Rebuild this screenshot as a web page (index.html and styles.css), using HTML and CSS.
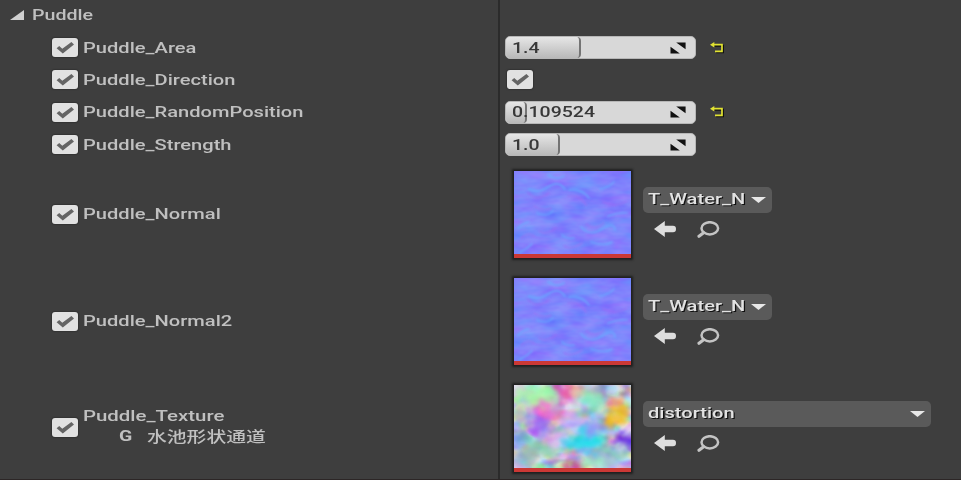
FILE: index.html
```
<!DOCTYPE html>
<html lang="en">
<head>
<meta charset="utf-8">
<title>Puddle</title>
<link rel="stylesheet" href="styles.css">
</head>
<body>
<svg class="defs" width="0" height="0" aria-hidden="true">
  <defs>
    <filter id="b1" x="-50%" y="-50%" width="200%" height="200%"><feGaussianBlur stdDeviation="0.9"/></filter>
    <filter id="b5" x="-50%" y="-50%" width="200%" height="200%" color-interpolation-filters="sRGB">
      <feGaussianBlur stdDeviation="4" result="soft"/>
      <feTurbulence type="fractalNoise" baseFrequency="0.06" numOctaves="3" seed="11" result="warp"/>
      <feDisplacementMap in="soft" in2="warp" scale="22" xChannelSelector="R" yChannelSelector="G"/>
      <feGaussianBlur stdDeviation="0.9"/>
    </filter>
    <filter id="ripple" x="0" y="0" width="100%" height="100%" color-interpolation-filters="sRGB">
      <feTurbulence type="fractalNoise" baseFrequency="0.035 0.085" numOctaves="3" seed="8"/>
      <feColorMatrix values="0.25 0 0 0 0.37  0 0.25 0 0 0.39  0 0 0 0 0.99  0 0 0 0 1"/>
    </filter>
    <filter id="cloud" x="0" y="0" width="100%" height="100%" color-interpolation-filters="sRGB">
      <feTurbulence type="fractalNoise" baseFrequency="0.06 0.08" numOctaves="2" seed="4"/>
      <feColorMatrix values="1.8 0 0 0 -0.1  0 1.8 0 0 -0.1  0 0 1.8 0 -0.05  0 0 0 0 1"/>
    </filter>
    <symbol id="check" viewBox="0 0 26 19"><path d="M4.6 10.3 7.2 8 10.3 10.7 19.4 4 22 6.4 10.8 15.6Z"/></symbol>
    <symbol id="expand" viewBox="0 0 16 12"><path d="M6.2.5H15.6V7.3ZM.5 4.7 9.8 11.5H.5Z"/></symbol>
    <symbol id="reset" viewBox="0 0 15 12"><path d="M3.3 2.7H12V9.3H5.2" fill="none" stroke="#111" stroke-width="2" transform="translate(1 1)"/><path d="M3 2.7H12V9.3H5" fill="none" stroke="#e2e332" stroke-width="1.7"/><path d="M0 2.7 4.3 0V5.4Z" fill="#e2e332"/></symbol>
    <symbol id="arrow" viewBox="0 0 22 16"><path d="M0 8 10.8 0V4.8H19Q22 4.8 22 8T19 11.2H10.8V16Z"/></symbol>
    <symbol id="find" viewBox="0 0 23 17"><ellipse cx="12.8" cy="7.3" rx="8.3" ry="6.1" fill="none" stroke="#c4c4c4" stroke-width="2.5"/><path d="M6.6 11.8 2 15.2" stroke="#c4c4c4" stroke-width="3.2" stroke-linecap="round"/></symbol>
    <symbol id="water" viewBox="0 0 117 87">
      <rect width="117" height="87" fill="#7c7ffb"/>
      <rect width="117" height="87" filter="url(#ripple)"/>
      <g fill="none" stroke-linecap="round" filter="url(#b1)">
        <g stroke="#66b0ff" stroke-width="1.7" opacity=".8"><path d="M15 18Q24 23 34 16T51 18M55 19Q67 17 75 27M23 42Q33 46 39 40M67 56Q76 66 88 58T101 59M86 18Q94 17 100 11M4 57Q9 52 15 51M5 82Q13 78 18 73M94 45Q104 41 114 42M48 64Q53 69 60 67M34 4Q43 10 50 5M77 71Q90 76 98 71"/></g>
        <g stroke="#a070f3" stroke-width="2" opacity=".55"><path d="M14 22Q24 31 35 22M20 35Q28 41 37 37M54 25Q66 23 72 34M72 53Q79 60 90 52M7 67Q14 61 20 65M89 31Q100 37 112 31M50 75Q57 80 68 72M25 60Q32 65 42 57"/></g>
      </g>
      <rect y="83" width="117" height="4" fill="#cb3835"/>
    </symbol>
    <symbol id="noise" viewBox="0 0 117 87">
      <rect width="117" height="87" fill="#c6c4e8"/>
      <rect width="117" height="87" filter="url(#cloud)" opacity=".5"/>
      <g filter="url(#b5)">
        <ellipse cx="22" cy="11" rx="19" ry="11" fill="#a4f8a4"/>
        <ellipse cx="49" cy="7" rx="8" ry="11" fill="#e34da8"/>
        <ellipse cx="67" cy="6" rx="8" ry="6" fill="#eab8b8"/>
        <ellipse cx="88" cy="7" rx="14" ry="6" fill="#a080cc"/>
        <ellipse cx="36" cy="25" rx="13" ry="8" fill="#f46ac8"/>
        <ellipse cx="79" cy="18" rx="13" ry="10" fill="#89e4b8"/>
        <ellipse cx="102" cy="28" rx="10" ry="12" fill="#f6b810"/>
        <ellipse cx="9" cy="28" rx="10" ry="8" fill="#c3b1d0"/>
        <ellipse cx="25" cy="41" rx="16" ry="8" fill="#935eee"/>
        <ellipse cx="60" cy="35" rx="14" ry="10" fill="#d0a8f8"/>
        <ellipse cx="83" cy="42" rx="16" ry="7" fill="#80a4f4"/>
        <ellipse cx="43" cy="53" rx="14" ry="7" fill="#d8acec"/>
        <ellipse cx="69" cy="57" rx="19" ry="10" fill="#20d8ea"/>
        <ellipse cx="4" cy="55" rx="8" ry="8" fill="#7a84ea"/>
        <ellipse cx="111" cy="58" rx="10" ry="9" fill="#5010e4"/>
        <ellipse cx="92" cy="68" rx="12" ry="7" fill="#90c8c4"/>
        <ellipse cx="25" cy="66" rx="17" ry="9" fill="#88caa8"/>
        <ellipse cx="57" cy="80" rx="9" ry="7" fill="#d8389f"/>
        <ellipse cx="80" cy="77" rx="14" ry="7" fill="#8ee5c4"/>
        <ellipse cx="104" cy="77" rx="12" ry="6" fill="#a8c8e6"/>
        <ellipse cx="10" cy="78" rx="12" ry="6" fill="#b8a4d4"/>
      </g>
      <rect width="117" height="87" filter="url(#cloud)" opacity=".12"/>
      <rect y="83" width="117" height="4" fill="#cb3835"/>
    </symbol>
  </defs>
</svg>
<main class="panel">
  <div class="row header">
    <div class="name"><svg class="fold" viewBox="0 0 14 10"><path d="M14 0V10H0Z"/></svg><span class="label">Puddle</span></div>
    <div class="value"></div>
  </div>
  <div class="row">
    <div class="name"><svg class="box"><use href="#check"/></svg><span class="label">Puddle_Area</span></div>
    <div class="value"><div class="spin"><div class="fill area"></div><span class="num">1.4</span><svg class="expand"><use href="#expand"/></svg></div><svg class="reset"><use href="#reset"/></svg></div>
  </div>
  <div class="row">
    <div class="name"><svg class="box"><use href="#check"/></svg><span class="label">Puddle_Direction</span></div>
    <div class="value"><svg class="box inset"><use href="#check"/></svg></div>
  </div>
  <div class="row">
    <div class="name"><svg class="box"><use href="#check"/></svg><span class="label">Puddle_RandomPosition</span></div>
    <div class="value"><div class="spin"><div class="fill random"></div><span class="num">0.109524</span><svg class="expand"><use href="#expand"/></svg></div><svg class="reset"><use href="#reset"/></svg></div>
  </div>
  <div class="row">
    <div class="name"><svg class="box"><use href="#check"/></svg><span class="label">Puddle_Strength</span></div>
    <div class="value"><div class="spin"><div class="fill strength"></div><span class="num">1.0</span><svg class="expand"><use href="#expand"/></svg></div></div>
  </div>
  <div class="row asset">
    <div class="name"><svg class="box"><use href="#check"/></svg><span class="label">Puddle_Normal</span></div>
    <div class="value"><svg class="thumb"><use href="#water"/></svg><div class="picker"><div class="combo"><span class="pick">T_Water_N</span><svg class="caret" viewBox="0 0 15 6"><path d="M0 0H15L7.5 6Z"/></svg></div><div class="tools"><svg class="arrow"><use href="#arrow"/></svg><svg class="find"><use href="#find"/></svg></div></div></div>
  </div>
  <div class="row asset">
    <div class="name"><svg class="box"><use href="#check"/></svg><span class="label">Puddle_Normal2</span></div>
    <div class="value"><svg class="thumb"><use href="#water"/></svg><div class="picker"><div class="combo"><span class="pick">T_Water_N</span><svg class="caret" viewBox="0 0 15 6"><path d="M0 0H15L7.5 6Z"/></svg></div><div class="tools"><svg class="arrow"><use href="#arrow"/></svg><svg class="find"><use href="#find"/></svg></div></div></div>
  </div>
  <div class="row asset">
    <div class="name"><svg class="box"><use href="#check"/></svg><div class="stack"><span class="label">Puddle_Texture</span><div class="channel"><span class="key">G</span><span class="note" lang="zh">水池形状通道</span></div></div></div>
    <div class="value"><svg class="thumb"><use href="#noise"/></svg><div class="picker"><div class="combo wide"><span class="pick">distortion</span><svg class="caret" viewBox="0 0 15 6"><path d="M0 0H15L7.5 6Z"/></svg></div><div class="tools"><svg class="arrow"><use href="#arrow"/></svg><svg class="find"><use href="#find"/></svg></div></div></div>
  </div>
</main>
</body>
</html>
```
FILE: styles.css
```
* { box-sizing: border-box; }
body {
  margin: 0;
  width: 961px;
  height: 480px;
  overflow: hidden;
  background: #3e3e3e;
  color: #c0c0c0;
  font: 15px/20px Roboto, "Noto Sans CJK SC", sans-serif;
}
svg { display: block; flex: none; }
.defs { position: absolute; }
.panel {
  height: 480px;
  overflow: hidden;
  display: grid;
  grid-template-rows: 31.4px repeat(4, 32.4px) repeat(3, 106.8px);
  border-bottom: 1px solid #2c2626;
}
.row { display: grid; grid-template-columns: 500px 1fr; }
.name {
  display: flex;
  align-items: center;
  padding-left: 51.5px;
  gap: 5.5px;
  border-right: 2px solid #2b2b2b;
}
.header .name { padding: 0 0 2px 9.5px; gap: 8.5px; }
.fold { width: 14px; height: 10px; fill: #d0d0d0; }
.label, .num, .pick {
  display: inline-block;
  white-space: nowrap;
  font-weight: 500;
  transform: scaleX(1.34);
  transform-origin: 0 50%;
}
.header .label { transform: scaleX(1.31); }
.box {
  width: 26px;
  height: 19px;
  border-radius: 3px;
  background: #e1e1e1;
  fill: #646464;
  box-shadow: 0 0 1px 1px #333;
}
.inset { margin-left: 2px; }
.value { display: flex; align-items: center; padding-left: 5px; }
.spin {
  width: 191px;
  height: 23px;
  display: grid;
  grid-template-columns: 1fr 16px;
  align-items: center;
  padding: 0 9px 0 6px;
  border-radius: 5px;
  background: #d8d8d8;
  border: 1px solid #b7b7b7;
  color: #383838;
  overflow: hidden;
  position: relative;
}
.fill {
  position: absolute;
  left: 0;
  top: 0;
  height: 21px;
  border-radius: 4px;
  border-right: 2px solid #747474;
  background: linear-gradient(#e6e6e6, #b9b9b9);
}
.area { width: 75px; }
.random { width: 21px; }
.strength { width: 54px; }
.num { position: relative; justify-self: start; transform: scaleX(1.3); }
.expand { width: 16px; height: 12px; fill: #111; }
.reset { width: 15px; height: 12px; margin-left: 14px; }
.asset .value { align-items: flex-start; padding: 10.5px 0 0 14px; }
.thumb { width: 117px; height: 87px; box-shadow: 0 0 2px 2px #202020; }
.picker { padding: 16px 0 0 12px; }
.combo {
  width: 129px;
  height: 26px;
  display: flex;
  align-items: center;
  justify-content: space-between;
  padding: 0 6.5px 2px 4.5px;
  border-radius: 5px;
  background: #5a5a5a;
}
.wide { width: 288px; }
.pick { color: #e2e2e2; text-shadow: 1px 1px 0 #111; }
.caret { width: 15px; height: 6px; fill: #e8e8e8; margin-top: 2px; }
.tools { display: flex; gap: 21px; padding: 8px 0 0 11px; }
.arrow { width: 22px; height: 16px; fill: #dedede; }
.find { width: 23px; height: 17px; }
.stack { display: flex; flex-direction: column; padding-bottom: 3px; }
.stack .label { align-self: flex-start; transform: scaleX(1.36); }
.channel { display: flex; gap: 17.5px; padding-left: 36px; }
.key {
  font-weight: 700;
  transform: scaleX(1.3);
  transform-origin: 0 50%;
}
.note {
  font-family: "Noto Sans CJK SC", sans-serif;
  font-weight: 500;
  transform: scaleX(1.32);
  transform-origin: 0 50%;
}
```
